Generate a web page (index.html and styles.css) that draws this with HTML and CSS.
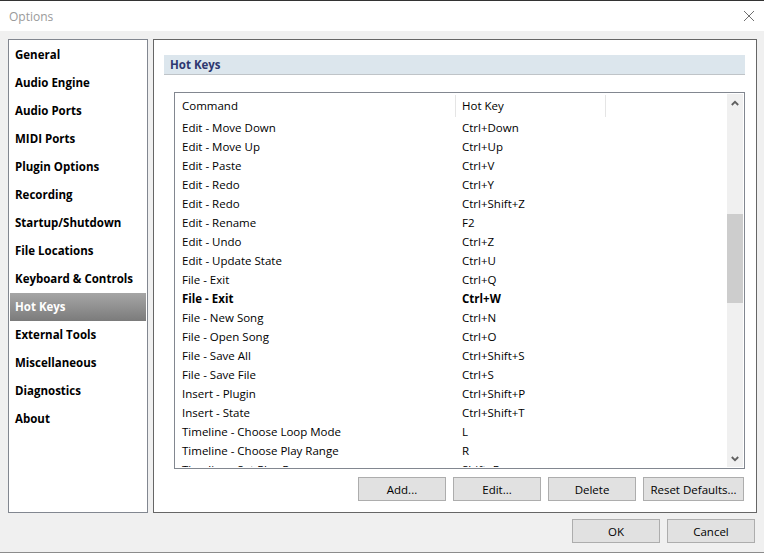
FILE: index.html
```html
<!DOCTYPE html>
<html lang="en">
<head>
<meta charset="utf-8">
<title>Options</title>
<link rel="stylesheet" href="styles.css">
</head>
<body>
<div class="window">
  <div class="titlebar">
    <span class="title">Options</span>
    <svg class="close" width="12" height="12" viewBox="0 0 12 12"><path d="M1 1L11 11M11 1L1 11" stroke="#6f6f6f" stroke-width="1" fill="none"/></svg>
  </div>
  <div class="main">
    <nav class="nav">
      <div class="nav-item">General</div>
      <div class="nav-item">Audio Engine</div>
      <div class="nav-item">Audio Ports</div>
      <div class="nav-item">MIDI Ports</div>
      <div class="nav-item">Plugin Options</div>
      <div class="nav-item">Recording</div>
      <div class="nav-item">Startup/Shutdown</div>
      <div class="nav-item">File Locations</div>
      <div class="nav-item">Keyboard &amp; Controls</div>
      <div class="nav-item selected">Hot Keys</div>
      <div class="nav-item">External Tools</div>
      <div class="nav-item">Miscellaneous</div>
      <div class="nav-item">Diagnostics</div>
      <div class="nav-item">About</div>
    </nav>
    <section class="page">
      <div class="page-header">Hot Keys</div>
      <div class="listbox">
        <div class="table">
          <div class="thead">
            <div class="th c1">Command</div>
            <div class="th c2">Hot Key</div>
            <div class="th c3"></div>
          </div>
          <div class="rows">
            <div class="row"><span class="c1">Edit - Move Down</span><span class="c2">Ctrl+Down</span></div>
            <div class="row"><span class="c1">Edit - Move Up</span><span class="c2">Ctrl+Up</span></div>
            <div class="row"><span class="c1">Edit - Paste</span><span class="c2">Ctrl+V</span></div>
            <div class="row"><span class="c1">Edit - Redo</span><span class="c2">Ctrl+Y</span></div>
            <div class="row"><span class="c1">Edit - Redo</span><span class="c2">Ctrl+Shift+Z</span></div>
            <div class="row"><span class="c1">Edit - Rename</span><span class="c2">F2</span></div>
            <div class="row"><span class="c1">Edit - Undo</span><span class="c2">Ctrl+Z</span></div>
            <div class="row"><span class="c1">Edit - Update State</span><span class="c2">Ctrl+U</span></div>
            <div class="row"><span class="c1">File - Exit</span><span class="c2">Ctrl+Q</span></div>
            <div class="row bold"><span class="c1">File - Exit</span><span class="c2">Ctrl+W</span></div>
            <div class="row"><span class="c1">File - New Song</span><span class="c2">Ctrl+N</span></div>
            <div class="row"><span class="c1">File - Open Song</span><span class="c2">Ctrl+O</span></div>
            <div class="row"><span class="c1">File - Save All</span><span class="c2">Ctrl+Shift+S</span></div>
            <div class="row"><span class="c1">File - Save File</span><span class="c2">Ctrl+S</span></div>
            <div class="row"><span class="c1">Insert - Plugin</span><span class="c2">Ctrl+Shift+P</span></div>
            <div class="row"><span class="c1">Insert - State</span><span class="c2">Ctrl+Shift+T</span></div>
            <div class="row"><span class="c1">Timeline - Choose Loop Mode</span><span class="c2">L</span></div>
            <div class="row"><span class="c1">Timeline - Choose Play Range</span><span class="c2">R</span></div>
            <div class="row"><span class="c1">Timeline - Set Play Range</span><span class="c2">Shift+R</span></div>
          </div>
        </div>
        <div class="scrollbar">
          <div class="arrow"><svg width="8" height="6" viewBox="0 0 8 6"><path d="M0.8 5L4 1.8L7.2 5" stroke="#606060" stroke-width="1.8" fill="none"/></svg></div>
          <div class="thumb"></div>
          <div class="track-rest"></div>
          <div class="arrow"><svg width="8" height="6" viewBox="0 0 8 6"><path d="M0.8 1L4 4.2L7.2 1" stroke="#606060" stroke-width="1.8" fill="none"/></svg></div>
        </div>
      </div>
      <div class="actions">
        <button class="btn">Add...</button>
        <button class="btn">Edit...</button>
        <button class="btn">Delete</button>
        <button class="btn wide">Reset Defaults...</button>
      </div>
    </section>
  </div>
  <div class="footer">
    <button class="btn">OK</button>
    <button class="btn">Cancel</button>
  </div>
</div>
</body>
</html>
```

FILE: styles.css
```css
* { box-sizing: border-box; }
html, body { margin: 0; padding: 0; }
body {
  background: #f0f0f0;
  font-family: "Open Sans", "Noto Sans", "Liberation Sans", sans-serif;
  font-size: 11.5px;
  color: #000;
}
.window {
  width: 764px;
  height: 553px;
  border-top: 1px solid #333333;
  border-bottom: 1px solid #8c8c8c;
  display: flex;
  flex-direction: column;
  overflow: hidden;
}
.titlebar {
  height: 30px;
  background: #ffffff;
  display: flex;
  align-items: center;
  justify-content: space-between;
  padding: 0 9px 0 9px;
  flex: none;
}
.title { color: #9a9a9a; font-size: 12px; }
.close { margin-right: 0; }
.main {
  display: flex;
  gap: 5px;
  padding: 8px 0 0 8px;
  height: 482px;
  flex: none;
}
.nav {
  width: 140px;
  height: 474px;
  background: #fff;
  border: 1px solid #828790;
  padding: 1px;
}
.nav-item {
  height: 28px;
  line-height: 28px;
  padding-left: 5px;
  font-weight: 700;
  white-space: nowrap;
}
.nav-item.selected {
  background: linear-gradient(#a6a6a6, #7b7b7b);
  color: #fff;
}
.page {
  width: 604px;
  height: 474px;
  background: #fff;
  border: 1px solid #666666;
  padding: 15px 11px 0 10px;
  display: flex;
  flex-direction: column;
}
.page-header {
  height: 20px;
  background: #dce6ed;
  border-bottom: 1px solid #bfc4c8;
  padding-left: 6px;
  line-height: 19px;
  font-weight: 700;
  color: #2e3870;
}
.listbox {
  margin: 17px 0 0 10px;
  height: 377px;
  border: 1px solid #828790;
  padding: 1px;
  display: flex;
}
.table {
  flex: 1;
  overflow: hidden;
}
.thead {
  display: flex;
  height: 24px;
  align-items: center;
}
.th {
  height: 22px;
  line-height: 22px;
  padding-left: 6px;
  border-right: 1px solid #e5e5e5;
}
.c1 { width: 280px; flex: none; padding-left: 6px; }
.c2 { width: 150px; flex: none; padding-left: 6px; }
.th.c3 { border-right: none; }
.row {
  display: flex;
  height: 19px;
  line-height: 19px;
  white-space: nowrap;
}
.row.bold { font-weight: 700; }
.scrollbar {
  width: 16px;
  background: #f0f0f0;
  display: flex;
  flex-direction: column;
  flex: none;
}
.arrow {
  height: 17px;
  display: flex;
  align-items: center;
  justify-content: center;
  flex: none;
}
.thumb {
  margin-top: 103px;
  height: 89px;
  background: #cdcdcd;
  flex: none;
}
.track-rest { flex: 1; }
.actions {
  display: flex;
  justify-content: flex-end;
  gap: 7px;
  margin-top: 8px;
  margin-right: 1px;
}
.btn {
  width: 88px;
  height: 24px;
  background: #e1e1e1;
  border: 1px solid #adadad;
  font-family: inherit;
  font-size: 11.5px;
  color: #000;
  padding: 0;
}
.btn.wide { width: 101px; }
.footer {
  display: flex;
  justify-content: flex-end;
  gap: 7px;
  padding: 6px 9px 0 0;
}
```
